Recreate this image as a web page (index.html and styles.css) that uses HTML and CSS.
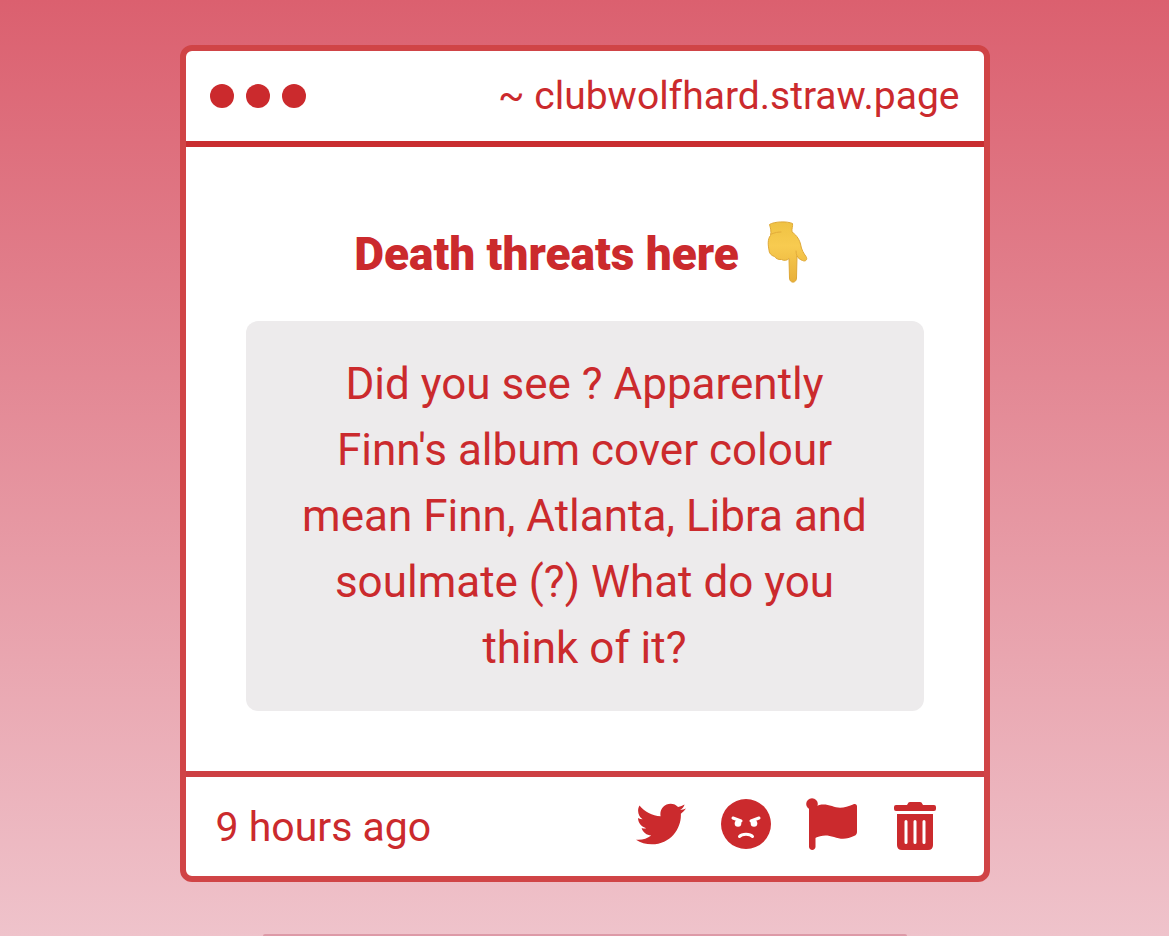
FILE: index.html
```html
<!DOCTYPE html>
<html lang="en">
<head>
    <meta charset="UTF-8">
    <meta name="viewport" content="width=device-width, initial-scale=1.0">
    <title>clubwolfhard.straw.page</title>
    <link rel="stylesheet" href="styles.css">
</head>
<body>
    <main class="window">
        <header class="titlebar">
            <div class="dots">
                <span class="dot"></span>
                <span class="dot"></span>
                <span class="dot"></span>
            </div>
            <a class="site" href="#">~ clubwolfhard.straw.page</a>
        </header>
        <section class="content">
            <h1>Death threats here
                <svg class="emoji" viewBox="0 0 48 64" role="img" aria-label="pointing down">
                    <defs>
                        <linearGradient id="skin" x1="0" y1="0" x2="0" y2="1">
                            <stop offset="0" stop-color="#efc243"/>
                            <stop offset="0.4" stop-color="#f8cb50"/>
                            <stop offset="1" stop-color="#e8b03a"/>
                        </linearGradient>
                    </defs>
                    <path fill="url(#skin)" stroke="#dfa836" stroke-width="1" d="M2.500 4.500C7 1.500 20 1 25.500 3.500C26 6 24.500 9 25 12C28 14 32 18 33.500 24C34.500 30 36.500 33 39 36.500C41 39.500 38.500 42 35.500 40.500C33 39.500 31 38 30 36L29.500 58C29.500 63.500 22.500 63.500 22.500 58L22 38.500C20 40.500 17 41 14.500 39.500C11 40 8.500 38 7.500 36.500C4 35.500 2 33 2 30C1 25 0.500 19 3.500 15.500C4.500 11.500 3.500 8 2.500 4.500Z"/>
                    <path fill="none" stroke="#e3ac3a" stroke-width="1" stroke-linecap="round" d="M4.500 14C8 12.500 11 12 14 12M30 36C29.500 34.500 29 33 29 31"/>
                </svg>
            </h1>
            <p class="message">Did you see ? Apparently Finn's album cover colour mean Finn, Atlanta, Libra and soulmate (?) What do you think of it?</p>
        </section>
        <footer class="footer">
            <span class="time">9 hours ago</span>
            <div class="actions">
                <button type="button" aria-label="Share on Twitter">
                    <svg width="50" height="52" viewBox="0 0 512 512">
                        <path d="M459.370 151.716c.325 4.548.325 9.097.325 13.645 0 138.720-105.583 298.558-298.558 298.558-59.452 0-114.680-17.219-161.137-47.106 8.447.974 16.568 1.299 25.340 1.299 49.055 0 94.213-16.568 130.274-44.832-46.132-.975-84.792-31.188-98.112-72.772 6.498.974 12.995 1.624 19.818 1.624 9.421 0 18.843-1.300 27.614-3.573-48.081-9.747-84.143-51.980-84.143-102.985v-1.299c13.969 7.797 30.214 12.670 47.431 13.319-28.264-18.843-46.781-51.005-46.781-87.391 0-19.492 5.197-37.360 14.294-52.954 51.655 63.675 129.300 105.258 216.365 109.807-1.624-7.797-2.599-15.918-2.599-24.040 0-57.828 46.782-104.934 104.934-104.934 30.213 0 57.502 12.670 76.670 33.137 23.715-4.548 46.456-13.320 66.599-25.340-7.798 24.366-24.366 44.833-46.132 57.827 21.117-2.273 41.584-8.122 60.426-16.243-14.292 20.791-32.161 39.308-52.628 54.253z"/>
                    </svg>
                </button>
                <button type="button" aria-label="Block sender">
                    <svg width="50" height="52" viewBox="0 0 50 52">
                        <circle cx="25" cy="26" r="25"/>
                        <g class="cutout">
                            <path d="M12 20L20 23M38 20L30 23"/>
                            <path d="M18.500 38.500C21 35.500 29 35.500 31.500 38.500"/>
                        </g>
                        <circle class="eye" cx="17" cy="25.500" r="3.300"/>
                        <circle class="eye" cx="33" cy="25.500" r="3.300"/>
                    </svg>
                </button>
                <button type="button" aria-label="Report">
                    <svg width="52" height="52" viewBox="0 0 52 52">
                        <circle cx="6" cy="6" r="5.800"/>
                        <path d="M3 8H9.500V48.500C9.500 53 3 53 3 48.500Z"/>
                        <path d="M9 8.500C15 5.500 20 6 26 8C33 11 40 9.500 47 6.500C49.500 5.500 51 6.500 51 8.500V34C51 36 50 37 48.500 37.800C41 41.500 35 41.500 28 39C21 36.500 15 37 9 40Z"/>
                    </svg>
                </button>
                <button type="button" aria-label="Delete">
                    <svg width="44" height="52" viewBox="0 0 44 52">
                        <path d="M3 7H14L15.500 4.500Q16 4 17 4H27Q28 4 28.500 4.500L30 7H41Q43 7 43 9V11Q43 13 41 13H3Q1 13 1 11V9Q1 7 3 7Z"/>
                        <path d="M4 16H40V47Q40 52 35 52H9Q4 52 4 47Z"/>
                        <path class="cutout" d="M13 23.500V44.500M22 23.500V44.500M31 23.500V44.500"/>
                    </svg>
                </button>
            </div>
        </footer>
    </main>
    <div class="next-card"></div>
</body>
</html>
```
FILE: styles.css
```css
* {
    box-sizing: border-box;
}
body {
    margin: 0;
    padding: 45px 20px 0;
    height: 100vh;
    display: flex;
    flex-direction: column;
    align-items: center;
    overflow: hidden;
    font-family: Roboto, "Liberation Sans", sans-serif;
    color: #cb2a2d;
    background: linear-gradient(#db606f, #efc3cb);
}
.window {
    width: 100%;
    max-width: 810px;
    flex-shrink: 0;
    background: #fff;
    border: 6px solid #d04446;
    border-radius: 12px;
}
.titlebar {
    display: flex;
    justify-content: space-between;
    align-items: center;
    height: 96px;
    padding: 0 24px;
    border-bottom: 6px solid #c92d30;
}
.dots {
    display: flex;
    gap: 12px;
}
.dot {
    width: 24px;
    height: 24px;
    border-radius: 50%;
    background: #cb2a2d;
}
.site {
    font-size: 39px;
    color: inherit;
    text-decoration: none;
}
.content {
    padding: 60px;
    text-align: center;
}
h1 {
    display: flex;
    justify-content: center;
    align-items: center;
    gap: 28px;
    margin: 0 0 20px;
    font-size: 46px;
    font-weight: 900;
    line-height: 94px;
}
.emoji {
    width: 48px;
    height: 64px;
    margin-bottom: 4px;
}
.message {
    margin: 0;
    padding: 30px 45px;
    font-size: 44px;
    line-height: 66px;
    background: #edebec;
    border-radius: 12px;
}
.footer {
    display: flex;
    justify-content: space-between;
    align-items: center;
    height: 105px;
    padding: 0 47px 0 30px;
    border-top: 6px solid #cd4043;
}
.time {
    font-size: 41px;
}
.actions {
    display: flex;
    gap: 35px;
    padding-bottom: 5px;
}
button {
    display: flex;
    padding: 0;
    border: none;
    background: none;
    cursor: pointer;
}
button svg {
    fill: #cb2a2d;
}
.cutout {
    fill: none;
    stroke: #fff;
    stroke-width: 3;
    stroke-linecap: round;
}
.eye {
    fill: #fff;
}
.next-card {
    flex: 1;
    width: 100%;
    max-width: 644px;
    margin-top: 52px;
    background: #dd9aa7;
    border-radius: 12px 12px 0 0;
}
```
